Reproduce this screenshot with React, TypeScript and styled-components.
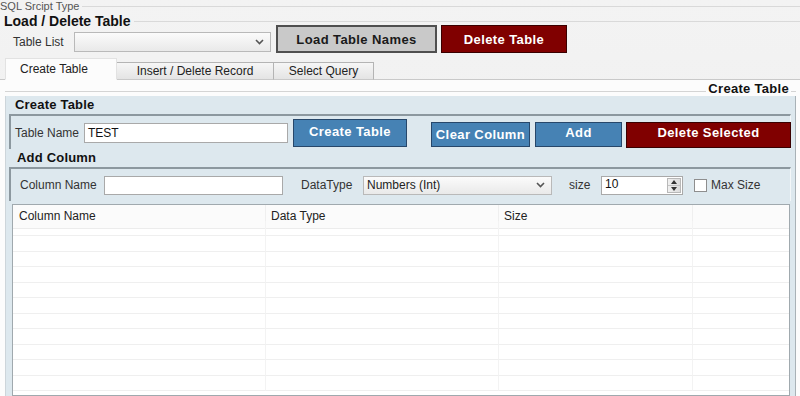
import React from 'react';
import styled, { createGlobalStyle } from 'styled-components';

const GlobalStyle = createGlobalStyle`
  html, body {
    margin: 0;
    padding: 0;
  }
  body {
    font-family: "Liberation Sans", Arial, sans-serif;
    font-size: 12px;
    color: #333;
    background: #efefef;
  }
`;

const Page = styled.div`
  width: 800px;
  height: 396px;
  overflow: hidden;
  background: linear-gradient(#f3f3f3, #ececec);
  display: flex;
  flex-direction: column;
`;

const Legend = styled.div<{ $size: number; $bold?: boolean; $height: number; $lh: number; $lineTop: number; $color?: string }>`
  display: flex;
  align-items: flex-start;
  height: ${p => p.$height}px;
  font-size: ${p => p.$size}px;
  font-weight: ${p => (p.$bold ? 700 : 400)};
  color: ${p => p.$color || '#111'};
  white-space: nowrap;

  & > span {
    line-height: ${p => p.$lh}px;
  }

  &::after {
    content: '';
    flex: 1;
    border-top: 1px solid #d9d9d9;
    margin: ${p => p.$lineTop}px 0 0 3px;
  }
`;

const LoadRow = styled.div`
  display: flex;
  align-items: flex-end;
  height: 28px;
  padding-left: 13px;
`;

const Label = styled.span<{ $w?: number }>`
  display: inline-block;
  ${p => (p.$w ? `width: ${p.$w}px;` : '')}
  line-height: 20px;
  color: #333;
  white-space: nowrap;
  flex-shrink: 0;
`;

const SelectBox = styled.div<{ $w: number; $h: number }>`
  width: ${p => p.$w}px;
  height: ${p => p.$h}px;
  box-sizing: border-box;
  border: 1px solid #b9b9b9;
  background: linear-gradient(#fbfbfb, #e9e9e9);
  display: flex;
  align-items: center;
  justify-content: space-between;
  padding: 0 6px 0 3px;
  color: #222;
  flex-shrink: 0;

  svg {
    display: block;
  }
`;

const Button = styled.button<{ $variant: 'gray' | 'red' | 'blue'; $w: number; $h: number; $mt?: number; $pb?: number }>`
  width: ${p => p.$w}px;
  height: ${p => p.$h}px;
  margin-top: ${p => p.$mt || 0}px;
  padding: 0 0 ${p => p.$pb || 0}px 0;
  box-sizing: border-box;
  font-family: "Liberation Sans", Arial, sans-serif;
  font-size: 13px;
  font-weight: 700;
  letter-spacing: 0.4px;
  flex-shrink: 0;
  cursor: pointer;
  background: ${p => (p.$variant === 'gray' ? '#c9c9c9' : p.$variant === 'red' ? '#800000' : '#4682b4')};
  color: ${p => (p.$variant === 'gray' ? '#1a1a1a' : '#fff')};
  border: ${p =>
    p.$variant === 'gray' ? '2px solid #4f4f4f' : p.$variant === 'red' ? '1px solid #3a0000' : '1px solid #27476a'};
`;

const TabStrip = styled.div`
  display: flex;
  align-items: flex-end;
  height: 22px;
  margin-top: 4px;
  padding-left: 5px;
  border-bottom: 1px solid #c9c9c9;
`;

const Tab = styled.div<{ $active?: boolean; $w: number }>`
  width: ${p => p.$w}px;
  height: ${p => (p.$active ? 22 : 18)}px;
  box-sizing: border-box;
  display: flex;
  align-items: center;
  justify-content: ${p => (p.$active ? 'flex-start' : 'center')};
  padding-left: ${p => (p.$active ? 14 : 0)}px;
  margin-bottom: -1px;
  color: #222;
  background: ${p => (p.$active ? '#fcfcfc' : 'linear-gradient(#f6f6f6, #e4e4e4)')};
  border: 1px solid ${p => (p.$active ? '#e2e2e2' : '#b4b4b4')};
  border-bottom: ${p => (p.$active ? '1px solid #fcfcfc' : '1px solid #c9c9c9')};
  & + & {
    border-left: none;
  }
`;

const ContentPane = styled.div`
  flex: 1;
  display: flex;
  flex-direction: column;
  background: #fcfcfc;
  padding: 2px 4px 0 5px;
  min-height: 0;
`;

const RightLegend = styled.div`
  display: flex;
  align-items: flex-start;
  height: 14px;
  font-size: 13px;
  font-weight: 700;
  letter-spacing: 0.3px;
  color: #111;

  & > span {
    line-height: 14px;
    margin: 0 2px;
  }

  &::before,
  &::after {
    content: '';
    border-top: 1px solid #d4d4d4;
    margin-top: 9px;
  }
  &::before {
    flex: 1;
  }
  &::after {
    width: 5px;
  }
`;

const Panel = styled.div`
  flex: 1;
  display: flex;
  flex-direction: column;
  background: #dde8ee;
  border-left: 1px solid #cdd5da;
  border-right: 1px solid #a9b2b7;
  padding: 0 4px 0 3px;
  min-height: 0;
`;

const PanelHeader = styled.div<{ $pl: number }>`
  height: 18px;
  padding: 1px 0 0 ${p => p.$pl}px;
  box-sizing: border-box;
  font-size: 13px;
  font-weight: 700;
  letter-spacing: 0.2px;
  line-height: 15px;
  color: #111;
`;

const GroupBox = styled.div<{ $h: number; $pl: number }>`
  height: ${p => p.$h}px;
  box-sizing: border-box;
  border-top: 2px solid #8c989f;
  border-left: 2px solid #8c989f;
  border-right: 1px solid #f3f7f9;
  display: flex;
  align-items: center;
  padding-left: ${p => p.$pl}px;
`;

const TextInput = styled.div<{ $w: number; $h: number; $top?: boolean }>`
  width: ${p => p.$w}px;
  height: ${p => p.$h}px;
  box-sizing: border-box;
  background: #fff;
  border: 1px solid #a9a9a9;
  padding: ${p => (p.$top ? '1px 0 0 3px' : '0 0 0 3px')};
  line-height: ${p => (p.$top ? '13px' : `${p.$h - 2}px`)};
  color: #111;
  flex-shrink: 0;
  position: relative;
`;

const Spinner = styled.div`
  position: absolute;
  right: 1px;
  top: 1px;
  bottom: 1px;
  width: 14px;
  display: flex;
  flex-direction: column;
  background: linear-gradient(to right, #f0f0f0, #dcdcdc);
  border: 1px solid #b8b8b8;
  box-sizing: border-box;
`;

const SpinHalf = styled.div`
  flex: 1;
  display: flex;
  align-items: center;
  justify-content: center;
  & + & {
    border-top: 1px solid #c4c4c4;
  }
`;

const CheckBox = styled.span`
  width: 13px;
  height: 13px;
  box-sizing: border-box;
  border: 1px solid #8e8e8e;
  background: #fff;
  flex-shrink: 0;
`;

const Grid = styled.div`
  margin: 3px 1px 0 3px;
  flex: 1;
  background: #fff;
  border: 1px solid #a0a9ae;
  display: grid;
  grid-template-columns: 253px 233px 194px 1fr;
  grid-auto-rows: 15.5px;
  align-content: start;
  overflow: hidden;
`;

const HeadCell = styled.div<{ $pl: number }>`
  height: 24px;
  box-sizing: border-box;
  padding-left: ${p => p.$pl}px;
  line-height: 23px;
  color: #222;
  background: #fbfbfb;
  border-bottom: 1px solid #ececec;
  border-right: 1px solid #efefef;
  &:nth-child(4n) {
    border-right: none;
  }
`;

const Cell = styled.div`
  box-sizing: border-box;
  border-bottom: 1px solid #efefef;
  border-right: 1px solid #f3f3f3;
  &:nth-child(4n) {
    border-right: none;
  }
`;

const Chevron = () => (
  <svg width="9" height="6" viewBox="0 0 9 6">
    <polyline points="1,1 4.5,4.5 8,1" fill="none" stroke="#555" strokeWidth="1.6" />
  </svg>
);

const Triangle = ({ up }: { up?: boolean }) => (
  <svg width="6" height="4" viewBox="0 0 6 4">
    <polygon points={up ? '0,4 3,0 6,4' : '0,0 6,0 3,4'} fill="#333" />
  </svg>
);

const headers = ['Column Name', 'Data Type', 'Size', ''];
const headerPad = [6, 5, 5, 5];

export default function App() {
  return (
    <Page>
      <GlobalStyle />
      <Legend $size={11} $height={13} $lh={13} $lineTop={6} $color="#555">
        <span>SQL Srcipt Type</span>
      </Legend>
      <Legend $size={14} $bold $height={12} $lh={16} $lineTop={8}>
        <span style={{ paddingLeft: 4 }}>Load / Delete Table</span>
      </Legend>
      <LoadRow>
        <Label $w={61} style={{ marginBottom: 1 }}>Table List</Label>
        <SelectBox $w={197} $h={20} style={{ marginBottom: 1 }}>
          <span />
          <Chevron />
        </SelectBox>
        <Button $variant="gray" $w={161} $h={28} style={{ marginLeft: 5 }}>
          Load Table Names
        </Button>
        <Button $variant="red" $w={126} $h={28} style={{ marginLeft: 4 }}>
          Delete Table
        </Button>
      </LoadRow>

      <TabStrip>
        <Tab $active $w={112}>Create Table</Tab>
        <Tab $w={157}>Insert / Delete Record</Tab>
        <Tab $w={100}>Select Query</Tab>
      </TabStrip>

      <ContentPane>
        <RightLegend>
          <span>Create Table</span>
        </RightLegend>
        <Panel>
          <PanelHeader $pl={6}>Create Table</PanelHeader>
          <GroupBox $h={35} $pl={4}>
            <Label $w={69}>Table Name</Label>
            <TextInput $w={204} $h={20}>TEST</TextInput>
            <Button $variant="blue" $w={114} $h={28} style={{ marginLeft: 5 }} $pb={2}>
              Create Table
            </Button>
            <Button $variant="blue" $w={99} $h={25} $mt={4} style={{ marginLeft: 24 }}>
              Clear Column
            </Button>
            <Button $variant="blue" $w={87} $h={25} $mt={4} $pb={5} style={{ marginLeft: 5 }}>
              Add
            </Button>
            <Button $variant="red" $w={165} $h={26} $mt={4} $pb={5} style={{ marginLeft: 4 }}>
              Delete Selected
            </Button>
          </GroupBox>

          <PanelHeader $pl={8}>Add Column</PanelHeader>
          <GroupBox $h={34} $pl={9}>
            <Label $w={84}>Column Name</Label>
            <TextInput $w={179} $h={19} />
            <Label $w={62} style={{ marginLeft: 18 }}>DataType</Label>
            <SelectBox $w={189} $h={19}>
              <span>Numbers (Int)</span>
              <Chevron />
            </SelectBox>
            <Label $w={32} style={{ marginLeft: 17 }}>size</Label>
            <TextInput $w={82} $h={19} $top>
              10
              <Spinner>
                <SpinHalf>
                  <Triangle up />
                </SpinHalf>
                <SpinHalf>
                  <Triangle />
                </SpinHalf>
              </Spinner>
            </TextInput>
            <CheckBox style={{ marginLeft: 11 }} />
            <Label style={{ marginLeft: 4 }}>Max Size</Label>
          </GroupBox>

          <Grid>
            {headers.map((h, i) => (
              <HeadCell key={i} $pl={headerPad[i]}>
                {h}
              </HeadCell>
            ))}
            {Array.from({ length: 44 }).map((_, i) => (
              <Cell key={i} />
            ))}
          </Grid>
        </Panel>
      </ContentPane>
    </Page>
  );
}
